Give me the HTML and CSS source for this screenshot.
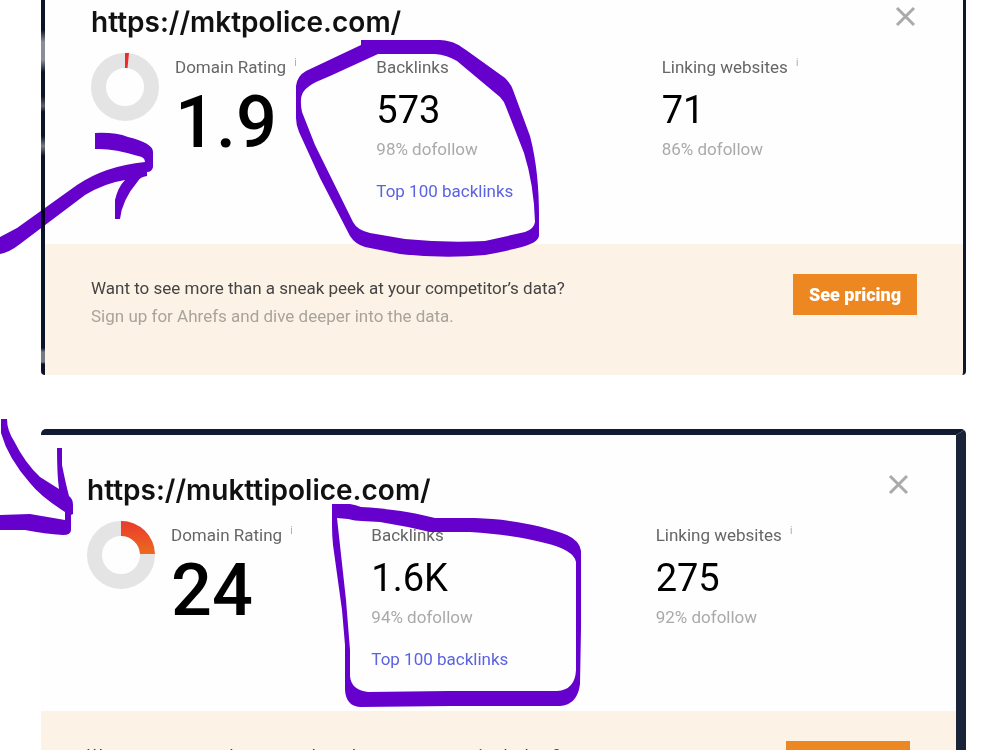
FILE: index.html
```html
<!DOCTYPE html>
<html lang="en">
<head>
  <meta charset="UTF-8" />
  <title>Backlink checker</title>
  <meta name="viewport" content="width=device-width, initial-scale=1.0" />
  <link rel="stylesheet" href="styles.css">
</head>
<body>
  <main class="page">
    <section class="card card-before">
      <div class="card-body">
        <header class="card-header">
          <h2>https://mktpolice.com/</h2>
          <button class="close" aria-label="Close">
            <svg viewBox="0 0 24 24"><path d="M4 4 L21 21 M21 4 L4 21" /></svg>
          </button>
        </header>
        <div class="stats">
          <div class="rating">
            <svg class="donut" viewBox="0 0 68 68">
              <circle cx="34" cy="34" r="26.5" />
              <path class="slice-red" d="M34 0 L38 0 L36.5 15 L34 15 Z" />
            </svg>
            <div>
              <div class="label">Domain Rating <sup>i</sup></div>
              <div class="score">1.9</div>
            </div>
          </div>
          <div>
            <div class="label">Backlinks</div>
            <div class="value">573</div>
            <div class="follow">98% dofollow</div>
            <a class="top-link" href="#">Top 100 backlinks</a>
          </div>
          <div>
            <div class="label">Linking websites <sup>i</sup></div>
            <div class="value">71</div>
            <div class="follow">86% dofollow</div>
          </div>
        </div>
      </div>
      <footer class="upsell">
        <div>
          <p class="upsell-title">Want to see more than a sneak peek at your competitor’s data?</p>
          <p class="upsell-text">Sign up for Ahrefs and dive deeper into the data.</p>
        </div>
        <button class="pricing">See pricing</button>
      </footer>
    </section>

    <section class="card card-after">
      <div class="card-body">
        <header class="card-header">
          <h2>https://mukttipolice.com/</h2>
          <button class="close" aria-label="Close">
            <svg viewBox="0 0 24 24"><path d="M4 4 L21 21 M21 4 L4 21" /></svg>
          </button>
        </header>
        <div class="stats">
          <div class="rating">
            <svg class="donut" viewBox="0 0 68 68">
              <defs>
                <linearGradient id="heat" x1="0" y1="0" x2="0" y2="1">
                  <stop offset="0" stop-color="#ea3a2d" />
                  <stop offset="1" stop-color="#ec6a1f" />
                </linearGradient>
              </defs>
              <circle cx="34" cy="34" r="26.5" />
              <path fill="url(#heat)" d="M34 0 A34 34 0 0 1 68 33 L53 33 A19 19 0 0 0 34 15 Z" />
            </svg>
            <div>
              <div class="label">Domain Rating <sup>i</sup></div>
              <div class="score">24</div>
            </div>
          </div>
          <div>
            <div class="label">Backlinks</div>
            <div class="value">1.6K</div>
            <div class="follow">94% dofollow</div>
            <a class="top-link" href="#">Top 100 backlinks</a>
          </div>
          <div>
            <div class="label">Linking websites <sup>i</sup></div>
            <div class="value">275</div>
            <div class="follow">92% dofollow</div>
          </div>
        </div>
      </div>
      <footer class="upsell">
        <div>
          <p class="upsell-title">Want to see more than a sneak peek at your competitor’s data?</p>
          <p class="upsell-text">Sign up for Ahrefs and dive deeper into the data.</p>
        </div>
        <button class="pricing">See pricing</button>
      </footer>
    </section>
  </main>

  <!-- marker notes drawn over both cards -->
  <svg class="marker marker-blend" viewBox="0 0 1000 750" aria-hidden="true">
    <path d="M0 237 L17 228 L77 185 Q105 166 145 162 Q145 157 138 156 Q113 148 95 149 L95 133 Q115 132 128 137 Q153 143 153 152 L153 167 Q152 172 147 172 L147 176 Q140 177 138 181 Q122 200 120 219 L115 219 L115 200 Q118 187 125 180 Q105 183 85 195 L20 244 Q10 252 0 254 Z" />
  </svg>
  <svg class="marker" viewBox="0 0 1000 750" aria-hidden="true">
    <path d="M361 40 L440 40 C455 41 460 46 466 50 L505 78 Q511 84 513 90 L530 136 C537 163 539 190 539 215 L539 236 C537 245 520 248 485 255 Q445 259 400 254 L365 247 Q355 244 350 236 L320 178 L299 132 Q296 125 296 118 L296 86 Q297 76 306 71 L361 45 Z
      M378 54 L435 54 Q447 55 457 61 L500 97 Q504 101 506 107 L524 153 Q534 185 535 222 Q534 229 525 232 L485 241 Q445 243 405 239 L370 233 Q357 230 353 222 L315 145 L302 112 Q299 97 304 91 Q308 86 316 82 L330 76 Z" />
    <path d="M332 504 L350 504 Q356 505 361 507 C395 509 415 513 435 518 L475 518 C510 519 545 526 567 535 Q580 541 581 551 L581 628 L580 684 C578 700 570 705 560 706 L450 706 L360 707 Q346 706 345 690 L345 645 L342 610 L333 545 Q332 535 332 525 Z
      M337 518 L348 519 Q355 521 362 521 L380 522 Q405 526 430 532 L470 532 Q515 535 545 543 Q574 550 576 562 L576 670 Q575 690 557 691 L450 691 L368 692 Q351 690 350 676 L350 650 L346 600 Z" />
    <path d="M1 419 L7 419 Q7 430 14 441 Q25 463 40 477 L59 489 Q57 475 57 448 L62 448 L62 465 Q66 485 69 496 Q73 499 73 505 L73 514 L71 515 L71 530 Q71 535 63 535 Q45 534 25 530 L0 530 L0 515 L30 514 L65 520 L65 512 Q40 496 30 483 Q8 458 1 433 Z" />
  </svg>
</body>
</html>
```
FILE: styles.css
```css
html, body {
  margin: 0;
  padding: 0;
  background: white;
  color: #333;
  font-family: Roboto, sans-serif;
  font-size: 17px;
}

body {
  position: relative;
  height: 100vh;
  overflow: hidden;
}

.page {
  display: flex;
  flex-direction: column;
  gap: 54px;
  padding: 0 34px 0 41px;
}

.card {
  box-sizing: border-box;
  overflow: hidden;
}

/* the strip on the left is what shows of the page behind the popup */
.card-before {
  padding-left: 4px;
  background: linear-gradient(#0b1426 0 30px, #8b8e96 42px 60px, #0b1426 72px 96px, #5d616b 106px, #0b1426 112px 136px, #777a83 146px, #0b1426 156px 348px, #777a83 352px 362px, #0b1426 364px);
  border-right: 3px solid #10182b;
  border-radius: 0 0 4px 4px;
}

.card-after {
  border-top: 6px solid #111b31;
  border-right: 10px solid #1a2438;
  border-radius: 5px 5px 0 0;
}

.card-body {
  padding: 4px 46px 40px;
  background: #fefefe;
}

.card-after .card-body {
  padding: 37px 46px 39px;
}

.card-header {
  display: flex;
  justify-content: space-between;
  align-items: flex-start;
  margin-bottom: 13px;
}

.card-header h2 {
  margin: 0;
  font-family: Inter, sans-serif;
  font-size: 28px;
  line-height: 36px;
  font-weight: 600;
  color: #111;
}

.close {
  width: 24px;
  height: 24px;
  padding: 0;
  border: none;
  background: none;
  cursor: pointer;
}

.close svg {
  display: block;
  fill: none;
  stroke: #aaa;
  stroke-width: 3;
}

.stats {
  display: grid;
  grid-template-columns: repeat(3, 1fr);
  gap: 30px;
}

.rating {
  display: flex;
  align-items: flex-start;
  gap: 16px;
}

.donut {
  width: 68px;
  height: 68px;
  flex-shrink: 0;
}

.donut circle {
  fill: none;
  stroke: #e4e4e4;
  stroke-width: 15;
}

.donut .slice-red {
  fill: #ee2a2a;
}

.label {
  line-height: 28px;
  color: #666;
  white-space: nowrap;
}

.label sup {
  margin-left: 4px;
  font-size: 10px;
  line-height: 0;
  color: #aaa;
}

.score {
  font-size: 72px;
  font-weight: 500;
  line-height: 84px;
  color: #000;
}

.value {
  font-size: 38px;
  line-height: 58px;
  color: #000;
}

.follow {
  line-height: 20px;
  color: #aaa;
}

.top-link {
  display: block;
  margin-top: 20px;
  line-height: 25px;
  color: #5b63e0;
  text-decoration: none;
}

.upsell {
  display: flex;
  justify-content: space-between;
  align-items: flex-start;
  padding: 30px 46px 45px;
  background: #fcf3e6;
}

.upsell p {
  margin: 0;
  line-height: 28px;
}

.upsell-title {
  color: #444;
}

.upsell-text {
  color: #aaa39a;
}

.pricing {
  padding: 0 16px;
  border: none;
  background: #ed8722;
  color: white;
  font-family: inherit;
  font-size: 18px;
  font-weight: 900;
  line-height: 41px;
  white-space: nowrap;
  cursor: pointer;
}

.marker {
  position: absolute;
  top: 0;
  left: 0;
  width: 1000px;
  height: 750px;
  fill: #6600cc;
  fill-rule: evenodd;
  pointer-events: none;
}

.marker-blend {
  mix-blend-mode: multiply;
}
```
